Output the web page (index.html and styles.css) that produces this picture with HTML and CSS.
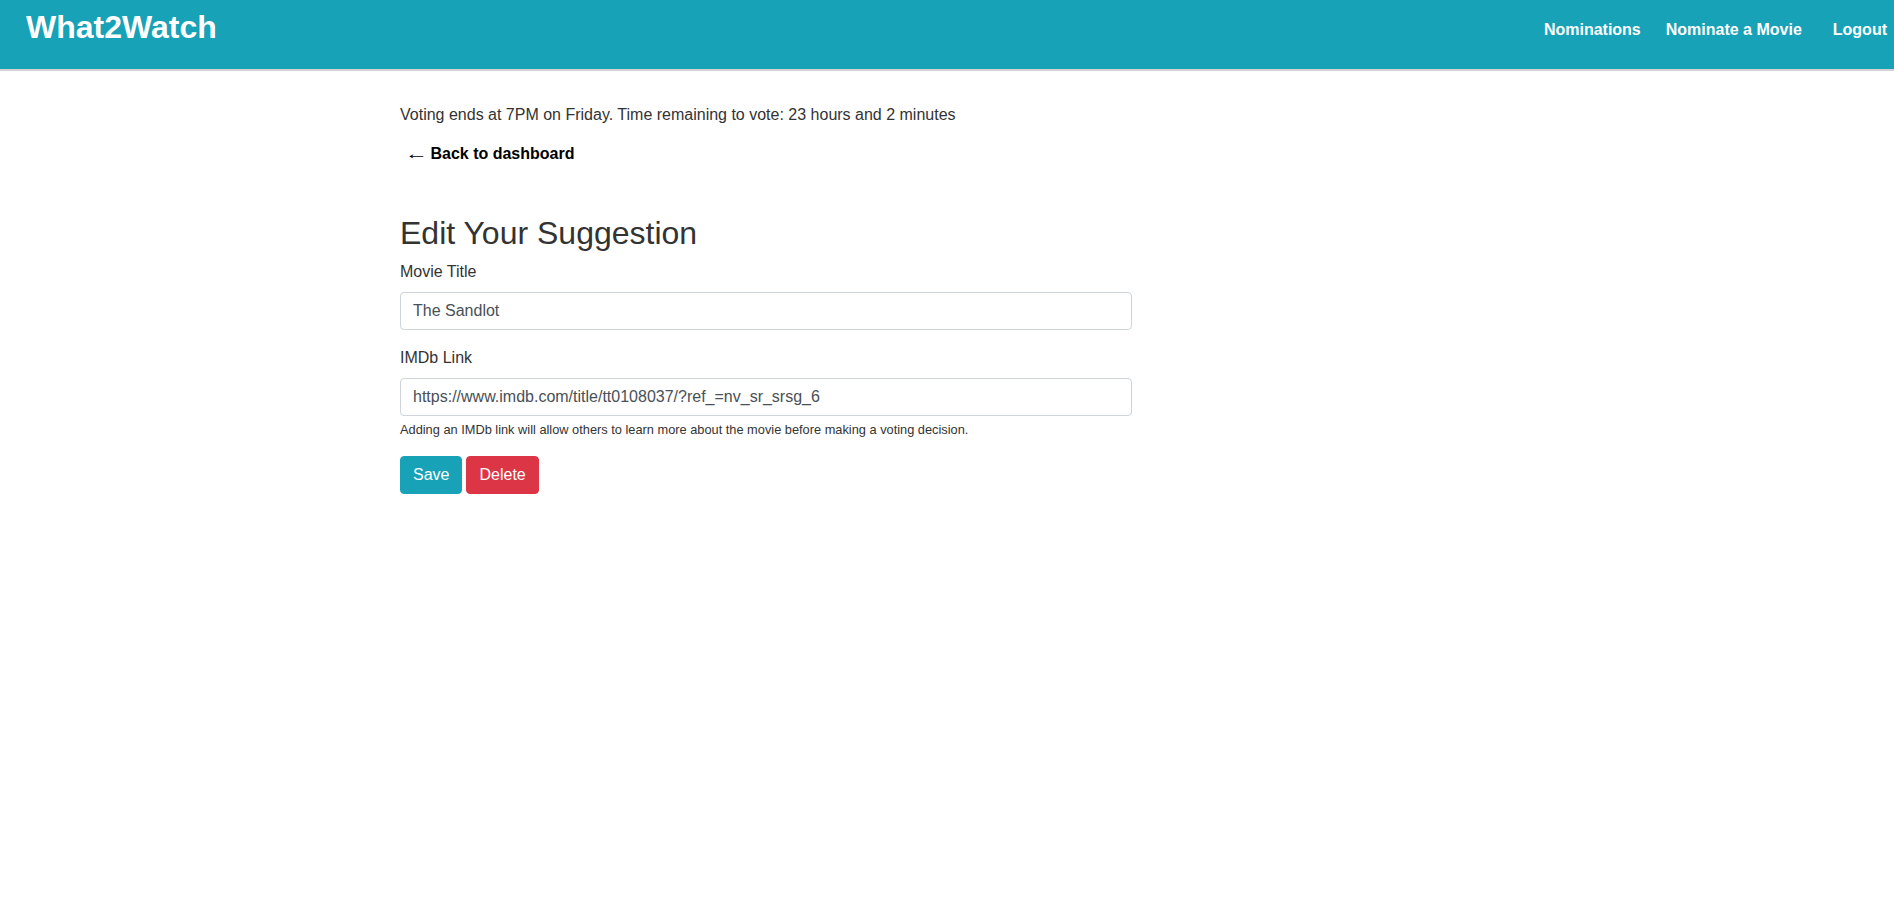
FILE: index.html
```html
<!DOCTYPE html>
<html lang="en">
<head>
<meta charset="utf-8">
<title>What2Watch - Edit Your Suggestion</title>
<link rel="stylesheet" href="styles.css">
</head>
<body>
<header class="navbar">
  <a class="brand" href="#">What2Watch</a>
  <nav class="nav">
    <a class="nav-link nav-link-first" href="#">Nominations</a>
    <a class="nav-link nav-link-second" href="#">Nominate a Movie</a>
    <a class="nav-link nav-link-last" href="#">Logout</a>
  </nav>
</header>
<main class="page">
  <p class="voting">Voting ends at 7PM on Friday. Time remaining to vote: 23 hours and 2 minutes</p>
  <p class="back"><a class="back-link" href="#"><span class="arrow">&larr;</span> Back to dashboard</a></p>
  <form class="edit-form">
    <h2 class="title">Edit Your Suggestion</h2>
    <div class="form-group">
      <label class="label" for="title">Movie Title</label>
      <input class="input" id="title" type="text" value="The Sandlot">
    </div>
    <div class="form-group">
      <label class="label" for="imdb">IMDb Link</label>
      <input class="input" id="imdb" type="text" value="https://www.imdb.com/title/tt0108037/?ref_=nv_sr_srsg_6">
      <small class="help">Adding an IMDb link will allow others to learn more about the movie before making a voting decision.</small>
    </div>
    <div class="actions">
      <button type="button" class="btn btn-save">Save</button>
      <button type="button" class="btn btn-delete">Delete</button>
    </div>
  </form>
</main>
</body>
</html>
```

FILE: styles.css
```css
* {
  box-sizing: border-box;
}

html, body {
  margin: 0;
  padding: 0;
  background: #fff;
}

body {
  font-family: "Liberation Sans", Arial, Helvetica, sans-serif;
  font-size: 16px;
  line-height: 1.5;
  color: #333;
}

.navbar {
  display: flex;
  justify-content: space-between;
  align-items: flex-start;
  height: 71px;
  background: #17a2b8;
  border-bottom: 2px solid #d3d3d3;
  padding: 0 7px 0 26px;
}

.brand {
  margin-top: 9px;
  font-size: 32px;
  line-height: 36px;
  font-weight: bold;
  color: #fff;
  text-decoration: none;
}

.nav {
  display: flex;
  margin-top: 18px;
}

.nav-link {
  font-size: 16px;
  line-height: 24px;
  font-weight: bold;
  color: #fff;
  text-decoration: none;
}

.nav-link-second {
  margin-left: 25px;
}

.nav-link-last {
  margin-left: 31px;
}

.page {
  width: 1094px;
  margin: 0 auto;
  padding-top: 32px;
}

.voting {
  margin: 0 0 15px;
}

.back {
  margin: 0 0 48px;
  padding-left: 10px;
}

.back-link {
  color: #000;
  font-weight: bold;
  text-decoration: none;
}

.arrow {
  display: inline-block;
  font-weight: normal;
  transform: scaleX(1.45);
  transform-origin: 70% 50%;
}

.edit-form {
  width: 732px;
}

.title {
  margin: 0 0 8px;
  font-size: 32px;
  font-weight: 500;
  line-height: 1.2;
  color: #333;
}

.form-group {
  margin-bottom: 16px;
}

.label {
  display: block;
  margin-bottom: 8px;
}

.input {
  display: block;
  width: 100%;
  height: 38px;
  padding: 6px 12px;
  font-family: inherit;
  font-size: 16px;
  line-height: 1.5;
  color: #495057;
  background: #fff;
  border: 1px solid #ced4da;
  border-radius: 4px;
}

.help {
  display: block;
  margin-top: 4px;
  font-size: 12.8px;
  line-height: 1.5;
  color: #333;
}

.actions {
  display: flex;
  gap: 4px;
}

.btn {
  height: 38px;
  padding: 6px 12px;
  font-family: inherit;
  font-size: 16px;
  line-height: 1.5;
  color: #fff;
  border: 1px solid transparent;
  border-radius: 4px;
  cursor: pointer;
}

.btn-save {
  background: #17a2b8;
  border-color: #17a2b8;
}

.btn-delete {
  background: #dc3545;
  border-color: #dc3545;
}
```
